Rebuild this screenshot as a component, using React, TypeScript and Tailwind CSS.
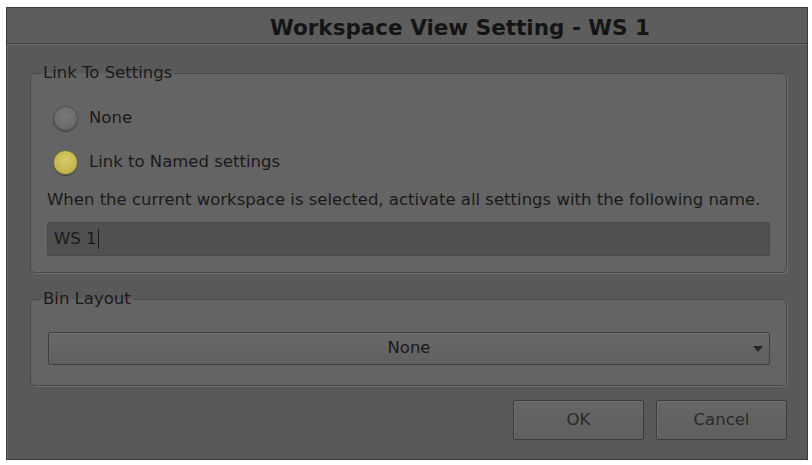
import React from 'react';

const font = { fontFamily: '"DejaVu Sans", Verdana, sans-serif' };

const Radio: React.FC<{ checked?: boolean; label: string }> = ({ checked, label }) => (
  <label className="flex items-center h-[30px] gap-[11px]">
    <span
      className={`w-[25px] h-[25px] rounded-full border ${
        checked
          ? 'border-[#6f6a3c] bg-[radial-gradient(circle_at_50%_40%,#d8cc6a,#b9a941)]'
          : 'border-[#4e4e4e] bg-[radial-gradient(circle_at_50%_40%,#7a7a7a,#626262)]'
      } shadow-[0_1px_1px_rgba(0,0,0,0.35)]`}
    />
    <span className="text-[16.5px] text-[#1a1a1a]">{label}</span>
  </label>
);

const Group: React.FC<{ title: string; className?: string; children: React.ReactNode }> = ({
  title,
  className,
  children,
}) => (
  <fieldset
    className={`border border-[#484848] rounded-[5px] bg-[#646464] px-[16px] shadow-[1px_1px_0_#6e6e6e] ${className ?? ''}`}
  >
    <legend className="ml-[-6px] px-[2px] text-[16.5px] leading-[20px] text-[#1a1a1a]">{title}</legend>
    {children}
  </fieldset>
);

export default function App() {
  return (
    <div className="w-[812px] h-[465px] bg-white pt-[7px] pl-[6px]" style={font}>
      <div className="w-[802px] h-[453px] border border-[#3a3a3a] bg-[#595959] shadow-[inset_1px_1px_0_#6a6a6a] flex flex-col">
        {/* title bar */}
        <div className="h-[36px] shrink-0 border-b border-[#404040] bg-[#5d5d5d] flex items-center justify-center pl-[106px] pt-[5px] shadow-[0_1px_0_#686868]">
          <span className="text-[21.5px] font-bold text-[#141414]">Workspace View Setting - WS 1</span>
        </div>

        <div className="flex flex-col pl-[23px] pr-[20px] pt-[19px]">
          <Group title="Link To Settings" className="pb-[16px]">
            <div className="flex flex-col pt-[20px] pl-[6px] gap-[14px]">
              <Radio label="None" />
              <Radio checked label="Link to Named settings" />
            </div>
            <p className="mt-[13px] text-[16.5px] leading-[20px] text-[#1a1a1a] whitespace-nowrap">
              When the current workspace is selected, activate all settings with the following name.
            </p>
            <div className="mt-[12px] h-[34px] bg-[#505050] border border-[#4a4a4a] rounded-[2px] flex items-center pl-[6px] text-[16.5px] text-[#1a1a1a]">
              <span>WS 1</span>
              <span className="ml-[1px] w-[1.5px] h-[20px] bg-[#1a1a1a]" />
            </div>
          </Group>

          <Group title="Bin Layout" className="mt-[16px] pb-[20px]">
            <div className="mt-[23px] ml-[1px] h-[33px] border border-[#3f3f3f] rounded-[2px] bg-[linear-gradient(#686868,#606060)] shadow-[inset_0_1px_0_#727272] flex items-center relative">
              <span className="flex-1 text-center text-[16.5px] text-[#1a1a1a]">None</span>
              <svg className="absolute right-[6px] top-[13px]" width="10" height="6" viewBox="0 0 10 6">
                <path d="M0 0 L10 0 L5 6 Z" fill="#262626" />
              </svg>
            </div>
          </Group>

          <div className="mt-[14px] flex justify-end gap-[12px]">
            {['OK', 'Cancel'].map((t) => (
              <button
                key={t}
                className="w-[131px] h-[40px] border border-[#3c3c3c] rounded-[2px] bg-[linear-gradient(#666666,#5f5f5f)] shadow-[inset_1px_1px_0_#707070] text-[16.5px] text-[#2a2a2a]"
              >
                {t}
              </button>
            ))}
          </div>
        </div>
      </div>
    </div>
  );
}
